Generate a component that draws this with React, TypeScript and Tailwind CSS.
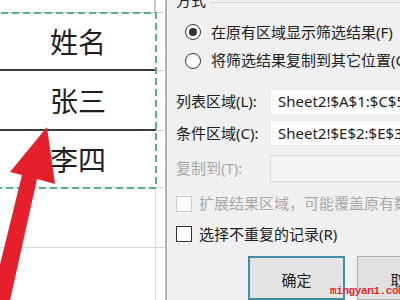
import React from "react";

const cjk = { fontFamily: '"Noto Sans", "Noto Sans CJK SC", sans-serif' };

function Row({
  h,
  text,
  bottom,
  right,
}: {
  h: string;
  text?: string;
  bottom: string;
  right: string;
}) {
  return (
    <div className={`flex ${h}`}>
      <div className={`w-[156px] shrink-0 flex items-center justify-center ${bottom} ${right}`}>
        {text && (
          <span
            className="text-[28px] leading-none text-[#1e1e1e]"
            style={{ fontFamily: '"Noto Sans CJK SC", sans-serif' }}
          >
            {text}
          </span>
        )}
      </div>
      <div className="flex-1 border-b border-[#d4d4d4]" />
    </div>
  );
}

export default function App() {
  return (
    <div className="relative w-[400px] h-[300px] overflow-hidden bg-white flex" style={cjk}>
      {/* Spreadsheet */}
      <div className="w-[165px] shrink-0 flex flex-col">
        <Row h="h-[13px]" bottom="border-b border-[#c8c8c8]" right="border-r-2 border-[#3a3a3a]" />
        <Row h="h-[58px]" text="姓名" bottom="border-b-2 border-[#3a3a3a]" right="" />
        <Row h="h-[60px]" text="张三" bottom="border-b-2 border-[#3a3a3a]" right="" />
        <Row h="h-[57px]" text="李四" bottom="border-b border-[#d4d4d4]" right="" />
        <Row h="h-[60px]" bottom="border-b border-[#d4d4d4]" right="border-r border-[#dcdcdc]" />
        <div className="flex flex-1">
          <div className="w-[156px] border-r border-[#dcdcdc]" />
        </div>
      </div>

      {/* Dialog */}
      <div className="flex-1 bg-[#f0f0f0] border-l-2 border-[#b4b4b4] flex flex-col pl-[9px] text-[15px] text-[#202020] leading-none">
        <div className="flex items-center h-[22px] -mt-[10px]">
          <span>方式</span>
          <div className="flex-1 h-px bg-[#d6d6d6] ml-[4px] mt-[4px]" />
        </div>
        <div className="mt-[10px] flex items-center h-[22px] pl-[9px] whitespace-nowrap">
          <div className="w-[16px] h-[16px] rounded-full border-[1.5px] border-[#333] bg-white flex items-center justify-center shrink-0">
            <div className="w-[8px] h-[8px] rounded-full bg-[#333]" />
          </div>
          <span className="ml-[10px]">在原有区域显示筛选结果(F)</span>
        </div>
        <div className="mt-[7px] flex items-center h-[22px] pl-[9px] whitespace-nowrap">
          <div className="w-[16px] h-[16px] rounded-full border-[1.5px] border-[#333] bg-white shrink-0" />
          <span className="ml-[10px]">将筛选结果复制到其它位置(O)</span>
        </div>
        <div className="mt-[17px] flex items-center h-[27px] whitespace-nowrap">
          <span className="w-[94px] shrink-0">列表区域(L):</span>
          <div className="w-[200px] shrink-0 h-full bg-white border border-[#ececec] flex items-center pl-[7px]">
            Sheet2!$A$1:$C$5
          </div>
        </div>
        <div className="mt-[5px] flex items-center h-[27px] whitespace-nowrap">
          <span className="w-[94px] shrink-0">条件区域(C):</span>
          <div className="w-[200px] shrink-0 h-full bg-white border border-[#ececec] flex items-center pl-[7px]">
            Sheet2!$E$2:$E$3
          </div>
        </div>
        <div className="mt-[9px] flex items-center h-[27px] whitespace-nowrap">
          <span className="w-[94px] shrink-0 text-[#a8a8a8]">复制到(T):</span>
          <div className="w-[200px] shrink-0 h-full bg-[#f5f5f5] border border-[#d9d9d9]" />
        </div>
        <div className="mt-[12px] flex items-center h-[20px] whitespace-nowrap">
          <div className="w-[16px] h-[16px] border border-[#cfcfcf] bg-[#f9f9f9] shrink-0" />
          <span className="ml-[7px] text-[#a8a8a8]">扩展结果区域，可能覆盖原有数据(V)</span>
        </div>
        <div className="mt-[11px] flex items-center h-[20px] whitespace-nowrap">
          <div className="w-[16px] h-[16px] border-[1.5px] border-[#333] bg-white shrink-0" />
          <span className="ml-[7px]">选择不重复的记录(R)</span>
        </div>
        <div className="mt-[12px] flex gap-[12px] pl-[72px]">
          <div className="w-[97px] h-[44px] shrink-0 border-2 border-[#3f8ea6] bg-[#e3e3e3] flex items-start justify-center pt-[15px]">
            确定
          </div>
          <div className="w-[97px] h-[44px] shrink-0 border border-[#adadad] bg-[#e1e1e1] flex items-start justify-center pt-[16px]">
            取消
          </div>
        </div>
      </div>

      {/* selection marquee */}
      <svg className="absolute left-0 top-0 pointer-events-none" width="165" height="200">
        <rect
          x="-10"
          y="13"
          width="166"
          height="175"
          fill="none"
          stroke="#55b08f"
          strokeWidth="2"
          strokeDasharray="7 4"
        />
      </svg>

      {/* red arrow */}
      <svg className="absolute left-0 top-0 pointer-events-none" width="120" height="300">
        <polygon
          points="47,127 55,184 37,179 9,305 -10,305 22,175 10,172"
          fill="#e5202a"
        />
      </svg>

      {/* watermark */}
      <div
        className="absolute left-[330px] top-[286px] text-[11px] leading-none font-bold text-[#e3201e] tracking-[-0.4px]"
        style={{ fontFamily: '"Liberation Mono", monospace', textShadow: "0 0 2px #fff" }}
      >
        mingyan1.com
      </div>
    </div>
  );
}
